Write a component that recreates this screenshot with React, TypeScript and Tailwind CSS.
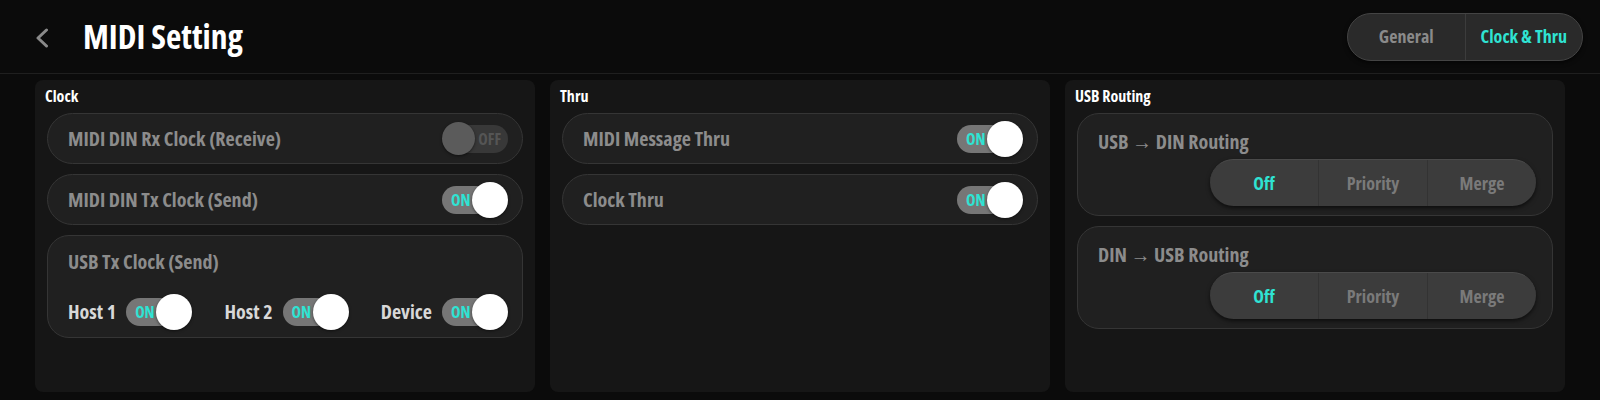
import React, { useState } from 'react';

const font = "font-['Open_Sans','Noto_Sans',sans-serif] [font-stretch:75%] font-bold";

function Toggle({ on }: { on: boolean }) {
  return (
    <div className="relative h-[36px] w-[66px] shrink-0">
      <div
        className={
          on
            ? 'absolute left-0 top-[4px] flex h-[28px] w-[62px] items-center rounded-full bg-[#767676] pl-[9px]'
            : 'absolute right-0 top-[4px] flex h-[28px] w-[62px] items-center justify-end rounded-full bg-[#383838] pr-[7px]'
        }
      >
        <span className={on ? 'text-[16px] leading-none text-[#2fe3d3]' : 'text-[16px] leading-none text-[#555555]'}>
          {on ? 'ON' : 'OFF'}
        </span>
      </div>
      {on ? (
        <div className="absolute right-0 top-0 h-[36px] w-[36px] rounded-full bg-white shadow-[0_1px_3px_rgba(0,0,0,0.5)]" />
      ) : (
        <div className="absolute left-0 top-[1.5px] h-[33px] w-[33px] rounded-full bg-[#5b5b5b] shadow-[0_1px_3px_rgba(0,0,0,0.5)]" />
      )}
    </div>
  );
}

function ToggleRow({ label, on }: { label: string; on: boolean }) {
  return (
    <div className="flex h-[51px] items-center justify-between rounded-full border border-[#353535] bg-[#202020] pl-[20px] pr-[14px]">
      <span className="text-[20px] text-[#8c8c8c]">{label}</span>
      <Toggle on={on} />
    </div>
  );
}

function Segmented({ options, value }: { options: string[]; value: string }) {
  return (
    <div className="flex h-[47px] w-[326px] overflow-hidden rounded-full border-t border-[#4a4a4a] bg-[#3c3c3c] shadow-[0_2px_4px_rgba(0,0,0,0.6)]">
      {options.map((o, i) => (
        <div
          key={o}
          className={
            'flex flex-1 items-center justify-center text-[18px] ' +
            (i > 0 ? 'border-l border-[#333333] ' : '') +
            (o === value ? 'text-[#2fe3d3]' : 'text-[#7a7a7a]')
          }
        >
          {o}
        </div>
      ))}
    </div>
  );
}

function RoutingCard({ title }: { title: string }) {
  return (
    <div className="flex h-[103px] flex-col rounded-[22px] border border-[#353535] bg-[#202020] pl-[20px] pr-[16px] pt-[16px]">
      <span className="text-[20px] leading-[24px] text-[#8c8c8c]">{title}</span>
      <div className="mt-[5px] flex justify-end">
        <Segmented options={['Off', 'Priority', 'Merge']} value="Off" />
      </div>
    </div>
  );
}

function Panel({ title, children }: { title: string; children: React.ReactNode }) {
  return (
    <section className="h-[312px] rounded-lg bg-[#161616] px-[12px] pt-[6px]">
      <h2 className="mb-[7px] text-[16px] leading-[20px] text-white">
        <span className="-ml-[2px]">{title}</span>
      </h2>
      <div className="flex flex-col gap-[10px]">{children}</div>
    </section>
  );
}

export default function App() {
  const [tab, setTab] = useState('Clock & Thru');

  return (
    <div className={'h-[400px] w-[1600px] overflow-hidden bg-[#0b0b0b] ' + font}>
      <header className="flex h-[74px] items-center border-b border-[#1f1f1f] pl-[35px] pr-[17px]">
        <svg width="14" height="20" viewBox="0 0 14 20" className="mt-[2px]">
          <polyline points="11.5,2 3,10 11.5,18" fill="none" stroke="#8a8a8a" strokeWidth="3" strokeLinecap="round" strokeLinejoin="round" />
        </svg>
        <h1 className="ml-[34px] text-[33.5px] leading-none text-white">MIDI Setting</h1>
        <div className="ml-auto flex h-[48px] w-[236px] rounded-full border-[1.5px] border-[#444444] bg-[#2a2a2a] shadow-[0_2px_4px_rgba(0,0,0,0.6)]">
          {['General', 'Clock & Thru'].map((t, i) => (
            <button
              key={t}
              onClick={() => setTab(t)}
              className={
                'flex flex-1 items-center justify-center text-[18px] ' +
                (i > 0 ? 'border-l border-[#3c3c3c] ' : '') +
                (t === tab ? 'text-[#2fe3d3]' : 'text-[#8a8a8a]')
              }
            >
              {t}
            </button>
          ))}
        </div>
      </header>

      <main className="grid grid-cols-3 gap-[15px] px-[35px] pt-[6px]">
        <Panel title="Clock">
          <ToggleRow label="MIDI DIN Rx Clock (Receive)" on={false} />
          <ToggleRow label="MIDI DIN Tx Clock (Send)" on />
          <div className="flex h-[103px] flex-col rounded-[22px] border border-[#353535] bg-[#202020] pl-[20px] pr-[14px] pt-[14px]">
            <span className="text-[20px] leading-[24px] text-[#8c8c8c]">USB Tx Clock (Send)</span>
            <div className="mt-[20px] flex items-center justify-between">
              {['Host 1', 'Host 2', 'Device'].map((h) => (
                <div key={h} className="flex items-center gap-[10px]">
                  <span className="text-[20px] text-[#d8d8d8]">{h}</span>
                  <Toggle on />
                </div>
              ))}
            </div>
          </div>
        </Panel>

        <Panel title="Thru">
          <ToggleRow label="MIDI Message Thru" on />
          <ToggleRow label="Clock Thru" on />
        </Panel>

        <Panel title="USB Routing">
          <RoutingCard title="USB → DIN Routing" />
          <RoutingCard title="DIN → USB Routing" />
        </Panel>
      </main>
    </div>
  );
}
